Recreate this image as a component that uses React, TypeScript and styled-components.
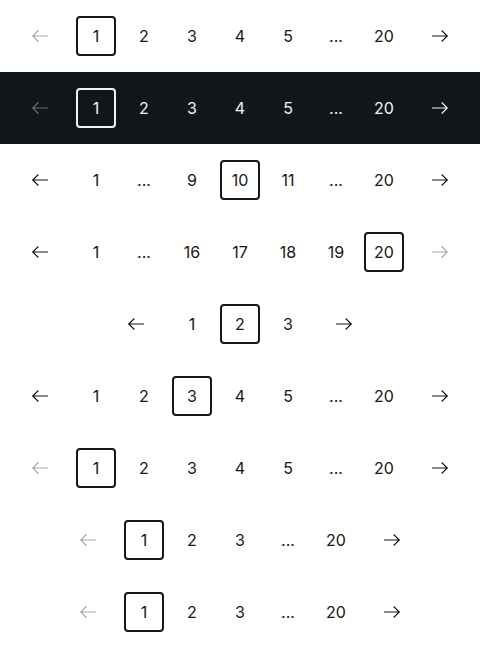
import React from "react";
import styled, { createGlobalStyle } from "styled-components";

const Global = createGlobalStyle`
  html, body { margin: 0; padding: 0; background: #ffffff; }
  body { font-family: Inter, "Noto Sans", "Liberation Sans", sans-serif; }
`;

const Page = styled.div`
  width: 480px;
  display: flex;
  flex-direction: column;
`;

const Band = styled.div<{ $dark?: boolean }>`
  height: 72px;
  display: flex;
  align-items: center;
  justify-content: center;
  background: ${(p) => (p.$dark ? "#11161a" : "#ffffff")};
  color: ${(p) => (p.$dark ? "#f4f4f4" : "#161616")};
`;

const Nav = styled.nav`
  display: flex;
  align-items: center;
  gap: 16px;
`;

const Pages = styled.div`
  display: flex;
  align-items: center;
  gap: 8px;
`;

const ArrowButton = styled.span<{ $disabled?: boolean; $dark?: boolean }>`
  width: 40px;
  height: 40px;
  display: flex;
  align-items: center;
  justify-content: center;
  color: ${(p) =>
    p.$disabled ? (p.$dark ? "#6f6f6f" : "#a8a8a8") : "currentColor"};
`;

const PageItem = styled.span<{ $active?: boolean }>`
  box-sizing: border-box;
  width: 40px;
  height: 40px;
  display: flex;
  align-items: center;
  justify-content: center;
  font-size: 16px;
  line-height: 1;
  border: 2px solid ${(p) => (p.$active ? "currentColor" : "transparent")};
  border-radius: 4px;
`;

const Arrow = ({ dir }: { dir: "left" | "right" }) => (
  <svg
    width="18"
    height="18"
    viewBox="0 0 18 18"
    fill="none"
    stroke="currentColor"
    strokeWidth="1.15"
    style={dir === "right" ? { transform: "scaleX(-1)" } : undefined}
  >
    <path d="M17 9H1.8 M7.3 3.5L1.8 9 7.3 14.5" />
  </svg>
);

type Row = {
  items: string[];
  active: number;
  prevDisabled?: boolean;
  nextDisabled?: boolean;
  dark?: boolean;
};

const rows: Row[] = [
  { items: ["1", "2", "3", "4", "5", "...", "20"], active: 0, prevDisabled: true },
  { items: ["1", "2", "3", "4", "5", "...", "20"], active: 0, prevDisabled: true, dark: true },
  { items: ["1", "...", "9", "10", "11", "...", "20"], active: 3 },
  { items: ["1", "...", "16", "17", "18", "19", "20"], active: 6, nextDisabled: true },
  { items: ["1", "2", "3"], active: 1 },
  { items: ["1", "2", "3", "4", "5", "...", "20"], active: 2 },
  { items: ["1", "2", "3", "4", "5", "...", "20"], active: 0, prevDisabled: true },
  { items: ["1", "2", "3", "...", "20"], active: 0, prevDisabled: true },
  { items: ["1", "2", "3", "...", "20"], active: 0, prevDisabled: true },
];

const Pagination = ({ row }: { row: Row }) => (
  <Band $dark={row.dark}>
    <Nav>
      <ArrowButton $disabled={row.prevDisabled} $dark={row.dark}>
        <Arrow dir="left" />
      </ArrowButton>
      <Pages>
        {row.items.map((it, i) => (
          <PageItem key={i} $active={i === row.active}>
            {it}
          </PageItem>
        ))}
      </Pages>
      <ArrowButton $disabled={row.nextDisabled} $dark={row.dark}>
        <Arrow dir="right" />
      </ArrowButton>
    </Nav>
  </Band>
);

export default function App() {
  return (
    <>
      <Global />
      <Page>
        {rows.map((r, i) => (
          <Pagination key={i} row={r} />
        ))}
      </Page>
    </>
  );
}
